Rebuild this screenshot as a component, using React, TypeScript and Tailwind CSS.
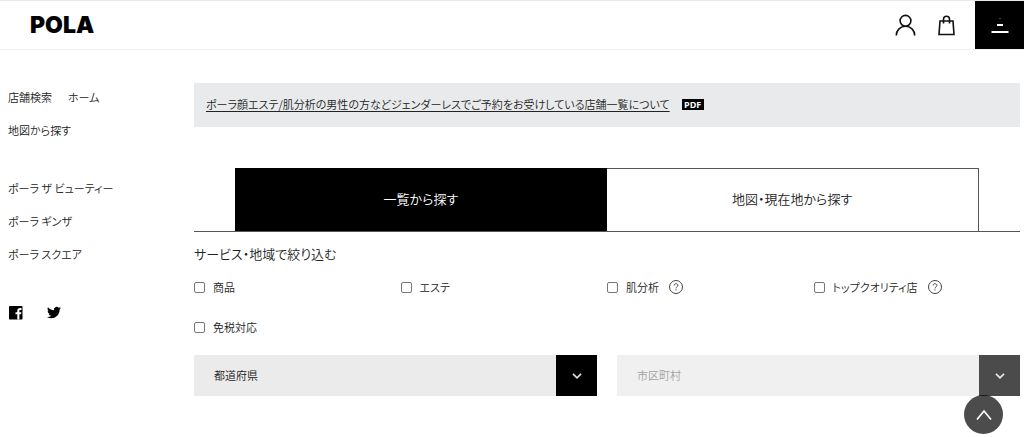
import React from 'react';

const navMain = ['ポーラ ザ ビューティー', 'ポーラ ギンザ', 'ポーラ スクエア'];

const services = [
  { id: 'goods', label: '商品', help: false },
  { id: 'esthe', label: 'エステ', help: false },
  { id: 'skin', label: '肌分析', help: true },
  { id: 'top', label: 'トップクオリティ店', help: true },
  { id: 'taxfree', label: '免税対応', help: false },
];

function Header() {
  return (
    <header className="flex h-[50px] items-stretch border-y border-t-[#e9e9e9] border-b-[#f3f3f3] pl-[30px]">
      <a href="#" className="flex items-center font-['Inter',sans-serif] text-[23px] font-black leading-none text-black">
        POLA
      </a>
      <div className="ml-auto flex items-center gap-5 pr-[19px]">
        <a href="#" aria-label="マイページ">
          <svg width="22" height="22" viewBox="0 0 22 22" fill="none" stroke="#111" strokeWidth="1.6">
            <circle cx="11.500" cy="6.800" r="5.400" />
            <path d="M2.300 21.500c0-5.400 4.100-9.300 9.200-9.300s9.200 3.900 9.200 9.300" />
          </svg>
        </a>
        <a href="#" aria-label="カート">
          <svg width="20" height="22" viewBox="0 0 20 22" fill="none" stroke="#111" strokeWidth="1.6">
            <path d="M4 7h13l1 13.500H3z" />
            <path d="M7.500 9.500V5.300a3 3 0 0 1 6 0v4.200" />
          </svg>
        </a>
      </div>
      <button type="button" aria-label="メニュー" className="flex w-[49px] items-center justify-center bg-black">
        <svg width="18" height="18" viewBox="0 0 18 18" fill="#fff">
          <rect x="8.500" y="2" width="1" height="1" opacity="0.5" />
          <rect x="6" y="8" width="6" height="2" />
          <rect x="0.500" y="15" width="17" height="2" />
        </svg>
      </button>
    </header>
  );
}

function Sidebar() {
  return (
    <nav className="w-[185px] shrink-0 pl-2 pt-2 text-[11px] leading-[13px]">
      <ul className="flex flex-col gap-5">
        <li className="flex gap-4">
          <a href="#">店舗検索</a>
          <a href="#">ホーム</a>
        </li>
        <li><a href="#">地図から探す</a></li>
      </ul>
      <ul className="mt-[45px] flex flex-col gap-5">
        {navMain.map((n) => (
          <li key={n}><a href="#">{n}</a></li>
        ))}
      </ul>
      <div className="mt-11 flex gap-6">
        <a href="#" aria-label="Facebook">
          <svg width="15" height="15" viewBox="0 0 15 15">
            <rect x="1" y="1" width="13.500" height="13.500" rx="0.700" fill="#000" />
            <path d="M9.300 14.500V9.300H7.500V7.200h1.800V5.700c0-1.800 1.100-2.800 2.700-2.800.8 0 1.300.1 1.500.1v1.900h-1.100c-.8 0-1 .4-1 1v1.300h2l-.3 2.100h-1.700v5.200z" fill="#fff" />
          </svg>
        </a>
        <a href="#" aria-label="Twitter">
          <svg width="14" height="15" viewBox="0 1.500 24 21" fill="#000">
            <path d="M23.950 4.570a10 10 0 0 1-2.820.77 4.960 4.960 0 0 0 2.160-2.720c-.95.550-2.010.960-3.130 1.180a4.920 4.920 0 0 0-8.380 4.480C7.690 8.090 4.070 6.130 1.640 3.160a4.820 4.820 0 0 0-.67 2.480c0 1.710.87 3.210 2.190 4.100a4.900 4.900 0 0 1-2.230-.62v.06a4.920 4.920 0 0 0 3.950 4.830 5 5 0 0 1-2.210.08 4.940 4.940 0 0 0 4.600 3.420A9.870 9.870 0 0 1 0 19.540a13.990 13.990 0 0 0 7.550 2.210c9.050 0 14-7.500 14-13.980 0-.21 0-.42-.02-.63a9.940 9.940 0 0 0 2.460-2.550z" />
          </svg>
        </a>
      </div>
    </nav>
  );
}

function HelpButton({ label }: { label: string }) {
  return (
    <button type="button" aria-label={label} className="ml-[10px]">
      <svg width="14" height="14" viewBox="0 0 14 14" fill="none" stroke="#444" strokeWidth="1">
        <circle cx="7" cy="7" r="6.500" />
        <path d="M5.100 5.500c0-1.100.8-1.800 1.900-1.800s1.900.7 1.900 1.700c0 1.400-1.900 1.500-1.900 3" />
        <path d="M7 9.400v1.100" />
      </svg>
    </button>
  );
}

function Dropdown({ id, text, disabled = false }: { id: string; text: string; disabled?: boolean }) {
  return (
    <div className={disabled ? 'relative flex-1 opacity-70' : 'relative flex-1'}>
      <select
        id={id}
        aria-label={text}
        disabled={disabled}
        className="block h-[41px] w-full appearance-none rounded-none bg-[#ebebeb] pl-5 pr-12 text-[11px] text-[#222] opacity-100 disabled:text-[#777]"
      >
        <option>{text}</option>
      </select>
      <span className="pointer-events-none absolute inset-y-0 right-0 flex w-[41px] items-center justify-center bg-black">
        <svg width="10" height="8" viewBox="0 0 10 8" fill="none" stroke="#ddd" strokeWidth="1.700">
          <path d="M1 1.800l4 4 4-4" />
        </svg>
      </span>
    </div>
  );
}

export default function App() {
  return (
    <div className="bg-white font-['Noto_Sans_CJK_JP',sans-serif] font-[350] text-[#222] [font-feature-settings:'palt']">
      <Header />
      <div className="flex pr-1 pt-[33px]">
        <Sidebar />
        <main className="min-w-0 flex-1 pl-[9px]">
          <div className="flex h-11 items-center gap-3 bg-[#e9eaec] px-3 pb-0.5">
            <a href="#" className="text-[11px] underline underline-offset-2">
              ポーラ顔エステ/肌分析の男性の方などジェンダーレスでご予約をお受けしている店舗一覧について
            </a>
            <span className="flex h-[11px] w-[22px] items-center justify-center bg-black font-['Open_Sans',sans-serif] text-[9px] font-bold leading-none text-white">
              PDF
            </span>
          </div>

          <div className="mt-[41px] flex border-b border-[#555] px-[5%] text-[13px]">
            <button type="button" className="h-[63px] flex-1 bg-black pb-0.5 text-white">一覧から探す</button>
            <button type="button" className="h-[63px] flex-1 border-r border-t border-[#555] pb-0.5">地図・現在地から探す</button>
          </div>

          <form>
            <h2 className="mt-3 text-[13px] leading-5">サービス・地域で絞り込む</h2>
            <ul className="mt-[13px] grid grid-cols-4 gap-y-5">
              {services.map((s) => (
                <li key={s.id} className="flex h-5 items-center">
                  <input
                    id={s.id}
                    type="checkbox"
                    className="h-[11px] w-[11px] appearance-none rounded-[2px] border border-[#777] bg-white checked:bg-black"
                  />
                  <label htmlFor={s.id} className="pl-2 text-[11px]">{s.label}</label>
                  {s.help && <HelpButton label={s.label + 'について'} />}
                </li>
              ))}
            </ul>
            <div className="mt-[18px] flex gap-5">
              <Dropdown id="pref" text="都道府県" />
              <Dropdown id="city" text="市区町村" disabled />
            </div>
          </form>
        </main>
      </div>
      <a
        href="#"
        aria-label="ページの先頭へ"
        className="fixed bottom-[3px] right-[21px] flex h-[39px] w-[39px] items-center justify-center rounded-full bg-black/70"
      >
        <svg width="16" height="12" viewBox="0 0 16 12" fill="none" stroke="#fff" strokeWidth="1.700">
          <path d="M1 10.500L8 2l7 8.500" />
        </svg>
      </a>
    </div>
  );
}
